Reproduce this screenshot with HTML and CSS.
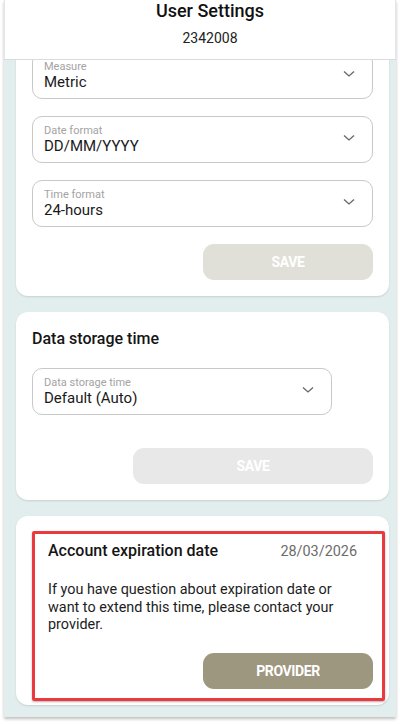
FILE: index.html
```html
<!DOCTYPE html>
<html lang="en">
<head>
<meta charset="utf-8">
<title>User Settings</title>
<link rel="stylesheet" href="styles.css">
</head>
<body>
<div class="frame">
  <header class="topbar">
    <div class="title">User Settings</div>
    <div class="subtitle">2342008</div>
  </header>
  <main class="content">
    <section class="card card-first">
      <div class="field">
        <div class="field-text">
          <span class="field-label">Measure</span>
          <span class="field-value">Metric</span>
        </div>
        <svg class="chev" width="12" height="8" viewBox="0 0 12 8"><path d="M1 1.5 L6 6 L11 1.5" fill="none" stroke="#666" stroke-width="1.3"/></svg>
      </div>
      <div class="field">
        <div class="field-text">
          <span class="field-label">Date format</span>
          <span class="field-value">DD/MM/YYYY</span>
        </div>
        <svg class="chev" width="12" height="8" viewBox="0 0 12 8"><path d="M1 1.5 L6 6 L11 1.5" fill="none" stroke="#666" stroke-width="1.3"/></svg>
      </div>
      <div class="field">
        <div class="field-text">
          <span class="field-label">Time format</span>
          <span class="field-value">24-hours</span>
        </div>
        <svg class="chev" width="12" height="8" viewBox="0 0 12 8"><path d="M1 1.5 L6 6 L11 1.5" fill="none" stroke="#666" stroke-width="1.3"/></svg>
      </div>
      <div class="actions">
        <button class="btn btn-save-warm">SAVE</button>
      </div>
    </section>

    <section class="card card-storage">
      <h2 class="card-title">Data storage time</h2>
      <div class="field field-narrow">
        <div class="field-text">
          <span class="field-label">Data storage time</span>
          <span class="field-value">Default (Auto)</span>
        </div>
        <svg class="chev" width="12" height="8" viewBox="0 0 12 8"><path d="M1 1.5 L6 6 L11 1.5" fill="none" stroke="#666" stroke-width="1.3"/></svg>
      </div>
      <div class="actions actions-storage">
        <button class="btn btn-save-gray">SAVE</button>
      </div>
    </section>

    <section class="card card-expire">
      <div class="highlight">
        <div class="expire-head">
          <h2 class="card-title">Account expiration date</h2>
          <span class="expire-date">28/03/2026</span>
        </div>
        <p class="expire-text">If you have question about expiration date or want to extend this time, please contact your provider.</p>
        <div class="actions actions-provider">
          <button class="btn btn-provider">PROVIDER</button>
        </div>
      </div>
    </section>
  </main>
</div>
</body>
</html>
```
FILE: styles.css
```css
* { box-sizing: border-box; }
html, body { margin: 0; padding: 0; background: #fff; }
body {
  font-family: Roboto, "Noto Sans", sans-serif;
  color: #1d1d1d;
  width: 400px;
  height: 724px;
  overflow: hidden;
}
.frame {
  position: relative;
  margin: 0 4px;
  height: 717px;
  background: #e2eded;
  box-shadow: 0 2px 3px rgba(0,0,0,0.25);
  overflow: hidden;
}
.topbar {
  position: absolute;
  top: 0; left: 0; right: 0;
  height: 60px;
  background: #fff;
  border-bottom: 1px solid #d6dcdc;
  border-left: 1px solid #e3e6e6;
  border-right: 1px solid #e3e6e6;
  display: flex;
  flex-direction: column;
  align-items: center;
  padding-left: 20px;
  z-index: 2;
}
.title {
  font-size: 18px;
  font-weight: 500;
  line-height: 22px;
  margin-top: 0;
  color: #111;
}
.subtitle {
  font-size: 14px;
  line-height: 18px;
  margin-top: 7px;
  color: #222;
}
.content {
  display: flex;
  flex-direction: column;
  gap: 16px;
  padding: 36px 7px 0 12px;
}
.card {
  background: #fff;
  border-radius: 12px;
  box-shadow: 0 1px 2px rgba(0,0,0,0.12);
  padding: 16px;
  display: flex;
  flex-direction: column;
}
.card-first { gap: 17px; padding-bottom: 16px; }
.field {
  height: 47px;
  border: 1px solid #c9c9c9;
  border-radius: 10px;
  display: flex;
  align-items: center;
  justify-content: space-between;
  padding: 0 17px 0 11px;
}
.field-text { display: flex; flex-direction: column; }
.field-label {
  font-size: 11px;
  line-height: 12px;
  color: #a3a3a3;
}
.field-value {
  font-size: 15px;
  line-height: 18px;
  color: #1a1a1a;
}
.chev { flex: none; margin-top: -3px; }
.field-narrow { width: 300px; padding-right: 17px; }
.actions { display: flex; justify-content: flex-end; }
.btn {
  border: 0;
  border-radius: 11px;
  height: 36px;
  color: #fff;
  font-family: Roboto, sans-serif;
  font-weight: 700;
  font-size: 14px;
  letter-spacing: -0.4px;
  padding: 0;
}
.btn-save-warm { width: 170px; background: #e0dfd8; }
.btn-save-gray { width: 240px; background: #e8e8e8; }
.btn-provider { width: 170px; background: #9e977f; }
.card-title {
  margin: 0;
  font-size: 16px;
  font-weight: 500;
  line-height: 20px;
  color: #151515;
}
.card-storage { padding-top: 17px; padding-bottom: 16px; }
.card-storage .field { margin-top: 19px; }
.actions-storage { margin-top: 33px; }
.card-expire { padding: 15px 4px 4px 16px; }
.highlight {
  border: 3px solid #ea3a3e;
  border-radius: 2px;
  box-shadow: 0 1px 2px rgba(0,0,0,0.3);
  padding: 7px 9px 9px 13px;
}
.expire-head {
  display: flex;
  justify-content: space-between;
  align-items: center;
  padding-right: 16px;
}
.expire-date { font-size: 14.4px; color: #6b6b6b; }
.expire-text {
  margin: 20px 0 0;
  padding-right: 22px;
  font-size: 14.4px;
  line-height: 17.5px;
  color: #1d1d1d;
}
.actions-provider { margin-top: 19px; }
```
